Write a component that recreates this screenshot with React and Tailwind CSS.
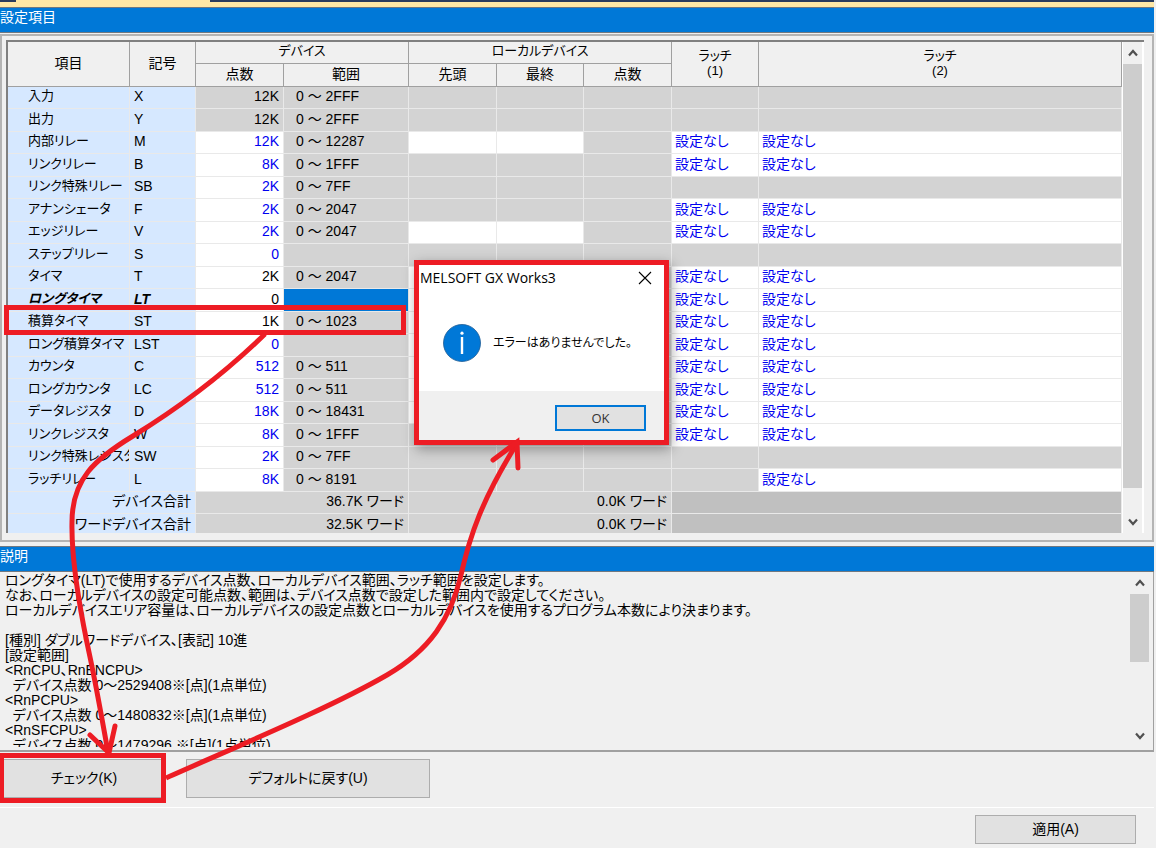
import React from "react";

const NONE = "設定なし";

// name, symbol, points, points colour, range, local device editable, latch 1, latch 2
const rows = [
  ["入力", "X", "12K", "locked", "0 ～ 2FFF", false, false, false],
  ["出力", "Y", "12K", "locked", "0 ～ 2FFF", false, false, false],
  ["内部リレー", "M", "12K", "blue", "0 ～ 12287", true, true, true],
  ["リンクリレー", "B", "8K", "blue", "0 ～ 1FFF", false, true, true],
  ["リンク特殊リレー", "SB", "2K", "blue", "0 ～ 7FF", false, false, false],
  ["アナンシェータ", "F", "2K", "blue", "0 ～ 2047", false, true, true],
  ["エッジリレー", "V", "2K", "blue", "0 ～ 2047", true, true, true],
  ["ステップリレー", "S", "0", "blue", "", false, false, false],
  ["タイマ", "T", "2K", "black", "0 ～ 2047", true, true, true],
  ["ロングタイマ", "LT", "0", "black", "", true, true, true],
  ["積算タイマ", "ST", "1K", "black", "0 ～ 1023", true, true, true],
  ["ロング積算タイマ", "LST", "0", "blue", "", true, true, true],
  ["カウンタ", "C", "512", "blue", "0 ～ 511", true, true, true],
  ["ロングカウンタ", "LC", "512", "blue", "0 ～ 511", true, true, true],
  ["データレジスタ", "D", "18K", "blue", "0 ～ 18431", true, true, true],
  ["リンクレジスタ", "W", "8K", "blue", "0 ～ 1FFF", false, true, true],
  ["リンク特殊レジスタ", "SW", "2K", "blue", "0 ～ 7FF", false, false, false],
  ["ラッチリレー", "L", "8K", "blue", "0 ～ 8191", false, false, true],
];

const totals = [
  ["デバイス合計", "36.7K ワード", "0.0K ワード"],
  ["ワードデバイス合計", "32.5K ワード", "0.0K ワード"],
];

const description = `ロングタイマ(LT)で使用するデバイス点数、ローカルデバイス範囲、ラッチ範囲を設定します。
なお、ローカルデバイスの設定可能点数、範囲は、デバイス点数で設定した範囲内で設定してください。
ローカルデバイスエリア容量は、ローカルデバイスの設定点数とローカルデバイスを使用するプログラム本数により決まります。

[種別] ダブルワードデバイス、[表記] 10進
[設定範囲]
<RnCPU、RnENCPU>
  デバイス点数 0～2529408※[点](1点単位)
<RnPCPU>
  デバイス点数 0～1480832※[点](1点単位)
<RnSFCPU>
  デバイス点数 0～1479296 ※[点](1点単位)`;

const cell = "overflow-hidden whitespace-nowrap border-r border-b pt-0 pb-[3px] px-0 border-[#e9e9e9]";
const head = "border-r border-b border-[#a0a0a0] bg-[#f0f0f0] px-0 pt-0 pb-[3px] text-center font-normal";

function Chevron({ down }) {
  return (
    <svg width="12" height="12" viewBox="0 0 12 12" fill="none" stroke="#505050" strokeWidth="2.2">
      <path d={down ? "M2 3.5 L6 8 L10 3.5" : "M2 8.5 L6 4 L10 8.5"} />
    </svg>
  );
}

function ScrollBar({ thumb }) {
  return (
    <div className="flex w-[19px] shrink-0 flex-col bg-[#f0f0f0]">
      <button aria-label="上へスクロール" className="flex h-[22px] shrink-0 items-center justify-center">
        <Chevron />
      </button>
      <div className={`w-full bg-[#cdcdcd] ${thumb}`} />
      <div className="flex-1" />
      <button aria-label="下へスクロール" className="flex h-[22px] shrink-0 items-center justify-center">
        <Chevron down />
      </button>
    </div>
  );
}

function TitleBar({ children }) {
  return (
    <h2 className="h-[26px] border-y border-[#707880] bg-[#0078d7] text-[14px] leading-[19px] text-white">
      {children}
    </h2>
  );
}

function DeviceTable() {
  return (
    <table className="w-full table-fixed border-separate border-spacing-0 leading-[18px]">
      <colgroup>
        <col className="w-[122px]" />
        <col className="w-[66px]" />
        <col className="w-[88px]" />
        <col className="w-[125px]" />
        <col className="w-[88px]" />
        <col className="w-[87px]" />
        <col className="w-[88px]" />
        <col className="w-[87px]" />
        <col />
      </colgroup>
      <thead>
        <tr className="h-[22px]">
          <th rowSpan={2} className={head}>項目</th>
          <th rowSpan={2} className={head}>記号</th>
          <th colSpan={2} className={`${head} text-[13px]`}>デバイス</th>
          <th colSpan={3} className={`${head} text-[13px]`}>ローカルデバイス</th>
          <th rowSpan={2} className={`${head} text-[13px] leading-[15px]`}>ラッチ<br />(1)</th>
          <th rowSpan={2} className={`${head} text-[13px] leading-[15px]`}>ラッチ<br />(2)</th>
        </tr>
        <tr className="h-[23px]">
          <th className={head}>点数</th>
          <th className={head}>範囲</th>
          <th className={head}>先頭</th>
          <th className={head}>最終</th>
          <th className={head}>点数</th>
        </tr>
      </thead>
      <tbody>
        {rows.map(([name, symbol, points, tone, range, local, latch1, latch2]) => {
          const selected = symbol === "LT";
          const accent = selected ? "font-bold italic" : "";
          return (
            <tr key={symbol} className="h-[22px] even:h-[23px]">
              <td className={`${cell} bg-[#d6e8ff] pl-5 text-[13px] ${accent}`}>{name}</td>
              <td className={`${cell} bg-[#d6e8ff] pl-1 ${accent}`}>{symbol}</td>
              <td
                className={`${cell} pr-1 text-right ${tone === "locked" ? "bg-[#d3d3d3]" : "bg-white"} ${
                  tone === "blue" ? "text-[#0000f0]" : ""
                }`}
              >
                {points}
              </td>
              <td className={`${cell} pl-3 ${selected ? "bg-[#0078d7]" : "bg-[#d3d3d3]"}`}>{range}</td>
              <td className={`${cell} ${local ? "bg-white" : "bg-[#d3d3d3]"}`} />
              <td className={`${cell} ${local ? "bg-white" : "bg-[#d3d3d3]"}`} />
              <td className={`${cell} bg-[#d3d3d3]`} />
              <td className={`${cell} pl-[3px] text-[#0000f0] ${latch1 ? "bg-white" : "bg-[#d3d3d3]"}`}>
                {latch1 ? NONE : ""}
              </td>
              <td className={`${cell} pl-[3px] text-[#0000f0] ${latch2 ? "bg-white" : "bg-[#d3d3d3]"}`}>
                {latch2 ? NONE : ""}
              </td>
            </tr>
          );
        })}
        {totals.map(([name, device, local]) => (
          <tr key={name} className="h-[22px] even:h-[23px]">
            <td colSpan={2} className={`${cell} bg-[#d6e8ff] pr-1 text-right`}>{name}</td>
            <td colSpan={2} className={`${cell} bg-[#d3d3d3] pr-1 text-right`}>{device}</td>
            <td colSpan={3} className={`${cell} bg-[#d3d3d3] pr-1 text-right`}>{local}</td>
            <td colSpan={2} className={`${cell} bg-[#c0c0c0]`} />
          </tr>
        ))}
      </tbody>
    </table>
  );
}

function Dialog() {
  return (
    <div
      role="dialog"
      aria-labelledby="dialog-title"
      className="absolute top-[260px] left-[414px] flex h-[185px] w-[255px] flex-col border-[5px] border-[#ed1c24] bg-white shadow-[2px_4px_12px_rgba(0,0,0,0.35)]"
    >
      <div className="flex h-[25px] items-center justify-between pr-3 pl-px font-['Open_Sans',sans-serif] text-[14px]">
        <span id="dialog-title">MELSOFT GX Works3</span>
        <button aria-label="閉じる">
          <svg width="14" height="14" viewBox="0 0 14 14" stroke="#000" strokeWidth="1.1">
            <path d="M1 1 L13 13 M13 1 L1 13" />
          </svg>
        </button>
      </div>
      <div className="flex flex-1 items-center gap-3 pt-1 pl-6">
        <svg width="38" height="38" viewBox="0 0 38 38">
          <circle cx="19" cy="19" r="18.5" fill="#0078d7" stroke="#1a5a94" strokeWidth="0.8" />
          <rect x="17.8" y="13" width="2.4" height="17" fill="#fff" />
          <circle cx="19" cy="9.2" r="1.6" fill="#fff" />
        </svg>
        <p className="text-[12px]">エラーはありませんでした。</p>
      </div>
      <div className="flex h-[49px] items-center justify-end bg-[#f0f0f0] pt-1 pr-[18px]">
        <button className="h-[26px] w-[91px] border-2 border-[#0078d7] bg-[#e1e1e1] font-['Open_Sans',sans-serif] text-[13px] leading-[20px] text-[#333]">
          OK
        </button>
      </div>
    </div>
  );
}

function Annotations() {
  return (
    <svg
      aria-hidden="true"
      className="pointer-events-none absolute top-0 left-0"
      width="1156"
      height="848"
      viewBox="0 0 1156 848"
      fill="none"
      stroke="#ed1c24"
      strokeWidth="5"
    >
      <rect x="6.5" y="307.5" width="397" height="25" />
      <rect x="1.5" y="755.5" width="162" height="45" />
      <path d="M265 334 C225 373 185 404 133 436 C95 459 72 479 72 522 C71 565 82 620 90 657 C98 695 103 725 108 752" />
      <path d="M90 735 L109 753 L115 726" strokeLinecap="round" />
      <path d="M166 778 C240 745 330 708 387 675 C430 650 451 618 461 575 C470 535 482 500 516 445" />
      <path d="M493 460 L517 442 L518 468" strokeLinecap="round" />
    </svg>
  );
}

const button = "border border-[#adadad] bg-[#e1e1e1] text-center";

export default function App() {
  return (
    <main className="relative min-h-screen overflow-hidden bg-[#f0f0f0] pr-[2px] font-['Liberation_Sans','Noto_Sans_CJK_JP',sans-serif] text-[14px] text-black [font-feature-settings:'palt']">
      <div className="flex h-[7px] flex-col bg-[#ffe8a6]">
        <div className="flex h-[2px]">
          <div className="w-4 bg-[#2b3c5c]" />
          <div className="w-[194px]" />
          <div className="flex-1 bg-[#2b3c5c]" />
        </div>
      </div>

      <section>
        <TitleBar>設定項目</TitleBar>
        <div className="mt-px border-2 border-[#b4b4b4] px-1 pt-1 pb-[7px]">
          <div className="mr-1 flex h-[493px] overflow-hidden border-t-2 border-l-2 border-[#808080] bg-white">
            <div className="min-w-0 flex-1 overflow-hidden">
              <DeviceTable />
            </div>
            <div className="flex pr-[2px] pl-px">
              <ScrollBar thumb="h-[424px]" />
            </div>
          </div>
        </div>
      </section>

      <section className="mt-1">
        <TitleBar>説明</TitleBar>
        <div className="flex h-[180px] border-r border-b-2 border-[#a0a0a0] pb-[3px]">
          <textarea
            readOnly
            aria-label="説明"
            value={description}
            className="min-w-0 flex-1 resize-none overflow-hidden bg-[#f0f0f0] pt-px pl-[5px] leading-[15px] whitespace-pre outline-none"
          />
          <div className="flex pr-1">
            <ScrollBar thumb="h-[68px]" />
          </div>
        </div>
      </section>

      <div className="flex gap-5 pt-[7px] pb-[9px] pl-[2px]">
        <button className={`${button} h-[39px] w-[164px]`}>チェック(K)</button>
        <button className={`${button} h-[39px] w-[244px]`}>デフォルトに戻す(U)</button>
      </div>
      <div className="flex justify-end border-t border-white pt-[7px] pr-[18px] pb-1">
        <button className={`${button} h-[29px] w-[161px]`}>適用(A)</button>
      </div>

      <Dialog />
      <Annotations />
    </main>
  );
}
